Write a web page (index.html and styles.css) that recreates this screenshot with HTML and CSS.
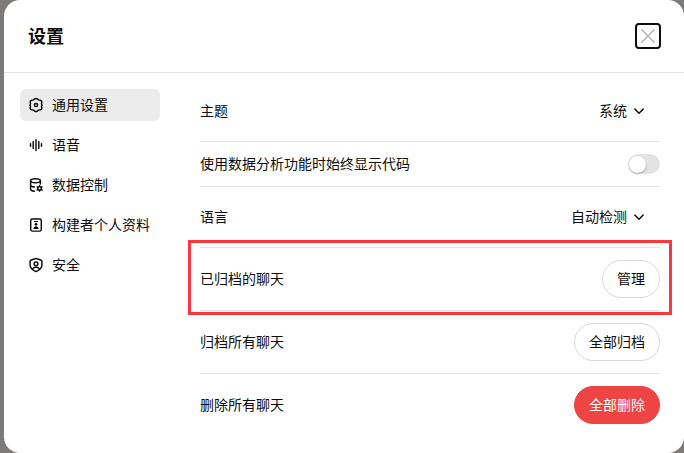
FILE: index.html
```html
<!DOCTYPE html>
<html lang="zh-CN">
<head>
<meta charset="utf-8">
<title>设置</title>
<link rel="stylesheet" href="styles.css">
</head>
<body>
<main class="dialog">
  <header class="header">
    <h1 class="title">设置</h1>
    <button class="close" aria-label="关闭">
      <svg width="16" height="16" viewBox="0 0 16 16"><path d="M1.8 1.8 14.2 14.2M14.2 1.8 1.8 14.2"/></svg>
    </button>
  </header>
  <div class="body">
    <nav class="nav">
      <a class="tab active">
        <svg class="icon" viewBox="0 0 16 16"><path d="M6.7 1.9Q8 .9 9.3 1.9L10.5 2.9 12.3 3.2Q13.9 3.6 13.9 5.1L13.5 6.7 14 8 13.5 9.3 13.9 10.9Q13.9 12.4 12.3 12.8L10.5 13.1 9.3 14.1Q8 15.1 6.7 14.1L5.5 13.1 3.7 12.8Q2.1 12.4 2.1 10.9L2.5 9.3 2 8 2.5 6.7 2.1 5.1Q2.1 3.6 3.7 3.2L5.5 2.9Z"/><circle cx="8" cy="8" r="1.6"/></svg>
        <span class="label">通用设置</span>
      </a>
      <a class="tab">
        <svg class="icon" viewBox="0 0 16 16"><path d="M2.5 6.7v2.6M5.2 4.4v7.2M8 2.6v10.8M10.8 4.4v7.2M13.5 6.7v2.6"/></svg>
        <span class="label">语音</span>
      </a>
      <a class="tab">
        <svg class="icon" viewBox="0 0 16 16"><ellipse cx="7.5" cy="3.7" rx="4.9" ry="2"/><path d="M2.6 3.7v8.6c0 1 1.4 1.8 3.8 2M2.6 8c0 1 1.4 1.8 3.8 2M12.4 3.7v3.2"/><circle cx="11.6" cy="11.4" r="1.8"/><path d="M11.6 8.5v1M11.6 13.3v1M9.1 9.9l.9.5M13.2 12.4l.9.5M9.1 12.9l.9-.5M13.2 10.4l.9-.5"/></svg>
        <span class="label">数据控制</span>
      </a>
      <a class="tab">
        <svg class="icon" viewBox="0 0 16 16"><rect x="2.7" y="1.9" width="10.6" height="12.2" rx="1.7"/><path class="solid" d="M6 4h4v1.1H6z"/><circle class="solid" cx="8" cy="7.3" r="1.4"/><path class="solid" d="M5.4 11.9c0-3.7 5.2-3.7 5.2 0z"/></svg>
        <span class="label">构建者个人资料</span>
      </a>
      <a class="tab">
        <svg class="icon" viewBox="0 0 16 16"><path d="M7.2 1.7Q8 1.3 8.8 1.7L12.8 3Q13.9 3.4 13.9 4.5V8.2C13.9 11.4 11.3 13 8 14.6 4.7 13 2.1 11.4 2.1 8.2V4.5Q2.1 3.4 3.2 3Z"/><circle cx="8" cy="6.8" r="1.9"/><path d="M4.5 12c1.3-2.3 5.7-2.3 7 0"/></svg>
        <span class="label">安全</span>
      </a>
    </nav>
    <section class="settings">
      <div class="row"><span class="label">主题</span><button class="select"><span class="label">系统</span><svg class="chevron" viewBox="0 0 12 12"><path d="m1.8 4 4.2 4.2L10.2 4"/></svg></button></div>
      <div class="row compact"><span class="label">使用数据分析功能时始终显示代码</span><span class="switch"></span></div>
      <div class="row"><span class="label">语言</span><button class="select"><span class="label">自动检测</span><svg class="chevron" viewBox="0 0 12 12"><path d="m1.8 4 4.2 4.2L10.2 4"/></svg></button></div>
      <div class="row tall marked"><span class="label">已归档的聊天</span><button class="pill">管理</button></div>
      <div class="row tall"><span class="label">归档所有聊天</span><button class="pill">全部归档</button></div>
      <div class="row last"><span class="label">删除所有聊天</span><button class="pill danger">全部删除</button></div>
    </section>
  </div>
</main>
</body>
</html>
```
FILE: styles.css
```css
* { box-sizing: border-box; }
body {
  margin: 0;
  height: 453px;
  overflow: hidden;
  padding-left: 4px;
  background: #7d7b7a;
  color: #0d0d0d;
  font: 14px/20px "Noto Sans CJK SC", sans-serif;
}
button { font: inherit; color: inherit; background: none; border: 0; padding: 0; }
svg { display: block; fill: none; stroke: currentColor; stroke-linecap: round; stroke-linejoin: round; }
.dialog { height: 453px; background: #fff; border-radius: 16px; }
.header {
  display: flex;
  align-items: center;
  justify-content: space-between;
  height: 73px;
  padding: 0 23px 0 24px;
  border-bottom: 1px solid #e3e3e3;
}
.title { margin: 0; padding-bottom: 2px; font-size: 18px; line-height: 28px; font-weight: 700; }
.close {
  display: grid;
  place-items: center;
  width: 26px;
  height: 26px;
  border: 2px solid #0d0d0d;
  border-radius: 4px;
  color: #b4b4b4;
}
.close svg { stroke-width: 1.5; }
.body { display: flex; gap: 40px; padding: 8px 24px 0 16px; }
.nav { display: flex; flex-direction: column; gap: 8px; width: 140px; padding-top: 8px; }
.tab {
  display: flex;
  align-items: center;
  gap: 8px;
  height: 32px;
  padding: 0 8px;
  border-radius: 6px;
  white-space: nowrap;
}
.active { background: #ececec; }
.label { padding-bottom: 2px; }
.icon { width: 16px; height: 16px; flex: none; stroke-width: 1.45; }
.solid { fill: currentColor; stroke: none; }
.settings { flex: 1; }
.row {
  position: relative;
  display: flex;
  align-items: center;
  justify-content: space-between;
  height: 61px;
  border-bottom: 1px solid #e3e3e3;
}
.compact { height: 45px; }
.tall { height: 63px; }
.last { height: 62px; border-bottom: 0; }
.select { display: flex; align-items: center; gap: 6px; padding-right: 15px; }
.chevron { width: 12px; height: 12px; stroke-width: 1.5; }
.switch {
  display: flex;
  align-items: center;
  width: 32px;
  height: 20px;
  padding-left: 1px;
  border-radius: 10px;
  background: #e3e3e3;
}
.switch::before {
  content: "";
  width: 17px;
  height: 17px;
  border-radius: 50%;
  background: #fff;
  box-shadow: 0 1px 2px rgba(0, 0, 0, .3);
}
.pill {
  height: 38px;
  padding: 0 14px 2px;
  border: 1px solid #d9d9d9;
  border-radius: 19px;
}
.danger { border-color: #ef4444; background: #ef4444; color: #fff; }
/* Highlight frame around the archived chats row */
.marked::after {
  content: "";
  position: absolute;
  inset: -8px -12px -5px;
  border: 3px solid #fa383b;
}
```
